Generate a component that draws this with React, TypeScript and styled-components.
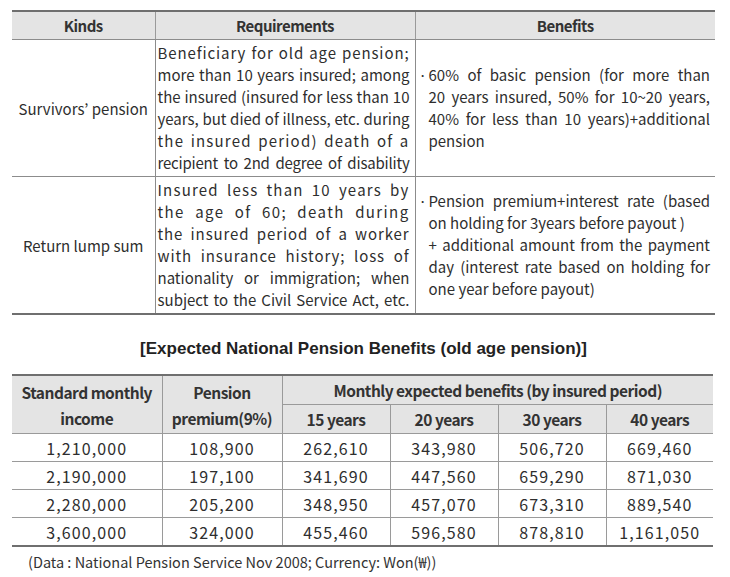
import React from "react";
import styled, { createGlobalStyle } from "styled-components";

const Global = createGlobalStyle`
  html, body { margin: 0; padding: 0; background: #fff; }
  body {
    font-family: "Noto Sans CJK KR", "Noto Sans", sans-serif;
    color: #2e2e2e;
  }
`;

const Page = styled.div`
  width: 730px;
  height: 577px;
  box-sizing: border-box;
  padding: 10px 15px 0 12px;
  display: flex;
  flex-direction: column;
`;

const KindsTable = styled.table`
  width: 703px;
  border-collapse: collapse;
  table-layout: fixed;
  border-top: 2px solid #6f6f6f;
  border-bottom: 2px solid #6f6f6f;
`;

const HeadCell = styled.th<{ $h?: number }>`
  background: #e4e4e4;
  height: ${(p) => p.$h ?? 27}px;
  padding: 0;
  font-size: 15px;
  font-weight: 700;
  letter-spacing: -0.5px;
  text-align: center;
  vertical-align: middle;
  line-height: 18px;
  color: #333;
  border-bottom: 1px solid #8c8c8c;
  border-left: 1px solid #9a9a9a;
  &:first-child { border-left: none; }
`;

const KindCell = styled.td`
  padding: 0;
  font-size: 15px;
  text-align: center;
  vertical-align: middle;
  border-bottom: 1px solid #8c8c8c;
`;

const TextCell = styled.td<{ $pl: number; $pr: number }>`
  padding: 2px ${(p) => p.$pr}px 2px ${(p) => p.$pl}px;
  font-size: 15px;
  line-height: 22px;
  vertical-align: middle;
  border-left: 1px solid #8c8c8c;
  border-bottom: 1px solid #8c8c8c;
`;

const Line = styled.div<{ $ls?: number; $last?: boolean; $indent?: boolean }>`
  display: block;
  white-space: nowrap;
  text-align: justify;
  text-align-last: ${(p) => (p.$last ? "left" : "justify")};
  letter-spacing: ${(p) => p.$ls ?? 0}px;
  margin-left: ${(p) => (p.$indent ? 10 : 0)}px;
`;

const Bullet = styled.span`
  display: inline-block;
  width: 10px;
  text-align: left;
`;

const Title = styled.div`
  margin-top: 24px;
  width: 703px;
  text-align: center;
  font-family: "Liberation Sans", Arial, sans-serif;
  font-weight: 700;
  font-size: 17px;
  line-height: 20px;
  color: #222;
`;

const BenefitTable = styled.table`
  margin-top: 15px;
  width: 701px;
  border-collapse: collapse;
  table-layout: fixed;
  border-top: 2px solid #6f6f6f;
  border-bottom: 2px solid #6f6f6f;
`;

const BHead = styled.th<{ $h?: number }>`
  background: #e4e4e4;
  height: ${(p) => p.$h ?? 28}px;
  padding: 0;
  font-size: 15.5px;
  font-weight: 700;
  letter-spacing: -0.5px;
  line-height: 26px;
  text-align: center;
  vertical-align: middle;
  color: #333;
  border: 1px solid #9a9a9a;
  &:first-child { border-left: none; }
  &:last-child { border-right: none; }
`;

const Num = styled.td`
  height: 27px;
  padding: 0;
  font-size: 16px;
  letter-spacing: 1.1px;
  text-align: center;
  vertical-align: middle;
  border: 1px solid #9a9a9a;
  &:first-child { border-left: none; }
  &:last-child { border-right: none; }
`;

const Note = styled.div`
  margin-top: 5px;
  padding-left: 16px;
  font-size: 14.5px;
  line-height: 20px;
  color: #333;
`;

const rows = [
  ["1,210,000", "108,900", "262,610", "343,980", "506,720", "669,460"],
  ["2,190,000", "197,100", "341,690", "447,560", "659,290", "871,030"],
  ["2,280,000", "205,200", "348,950", "457,070", "673,310", "889,540"],
  ["3,600,000", "324,000", "455,460", "596,580", "878,810", "1,161,050"],
];

export default function App() {
  return (
    <Page>
      <Global />
      <KindsTable>
        <colgroup>
          <col style={{ width: 143 }} />
          <col style={{ width: 260 }} />
          <col style={{ width: 300 }} />
        </colgroup>
        <thead>
          <tr>
            <HeadCell>Kinds</HeadCell>
            <HeadCell>Requirements</HeadCell>
            <HeadCell>Benefits</HeadCell>
          </tr>
        </thead>
        <tbody>
          <tr>
            <KindCell>Survivors’ pension</KindCell>
            <TextCell $pl={2} $pr={5}>
              <Line $ls={0.9}>Beneficiary for old age pension;</Line>
              <Line>more than 10 years insured; among</Line>
              <Line>the insured (insured for less than 10</Line>
              <Line>years, but died of illness, etc. during</Line>
              <Line $ls={1.2}>the insured period) death of a</Line>
              <Line $ls={-0.2}>recipient to 2nd degree of disability</Line>
            </TextCell>
            <TextCell $pl={3} $pr={5}>
              <Line><Bullet>·</Bullet>60% of basic pension (for more than</Line>
              <Line $indent>20 years insured, 50% for 10~20 years,</Line>
              <Line $indent>40% for less than 10 years)+additional</Line>
              <Line $indent $last>pension</Line>
            </TextCell>
          </tr>
          <tr>
            <KindCell>Return lump sum</KindCell>
            <TextCell $pl={2} $pr={5}>
              <Line $ls={1.2}>Insured less than 10 years by</Line>
              <Line $ls={1.4}>the age of 60; death during</Line>
              <Line $ls={0.9}>the insured period of a worker</Line>
              <Line $ls={0.9}>with insurance history; loss of</Line>
              <Line>nationality or immigration; when</Line>
              <Line>subject to the Civil Service Act, etc.</Line>
            </TextCell>
            <TextCell $pl={3} $pr={5}>
              <Line><Bullet>·</Bullet>Pension premium+interest rate (based</Line>
              <Line $indent $last>on holding for 3years before payout )</Line>
              <Line $indent>+ additional amount from the payment</Line>
              <Line $indent>day (interest rate based on holding for</Line>
              <Line $indent $last>one year before payout)</Line>
            </TextCell>
          </tr>
        </tbody>
      </KindsTable>

      <Title>[Expected National Pension Benefits (old age pension)]</Title>

      <BenefitTable>
        <colgroup>
          <col style={{ width: 150 }} />
          <col style={{ width: 120 }} />
          <col style={{ width: 108 }} />
          <col style={{ width: 108 }} />
          <col style={{ width: 108 }} />
          <col style={{ width: 107 }} />
        </colgroup>
        <thead>
          <tr>
            <BHead rowSpan={2}>Standard monthly<br />income</BHead>
            <BHead rowSpan={2}>Pension<br />premium(9%)</BHead>
            <BHead colSpan={4}>Monthly expected benefits (by insured period)</BHead>
          </tr>
          <tr>
            <BHead>15 years</BHead>
            <BHead>20 years</BHead>
            <BHead>30 years</BHead>
            <BHead>40 years</BHead>
          </tr>
        </thead>
        <tbody>
          {rows.map((r) => (
            <tr key={r[0]}>
              {r.map((v, i) => (
                <Num key={i}>{v}</Num>
              ))}
            </tr>
          ))}
        </tbody>
      </BenefitTable>

      <Note>(Data : National Pension Service Nov 2008; Currency: Won(₩))</Note>
    </Page>
  );
}
